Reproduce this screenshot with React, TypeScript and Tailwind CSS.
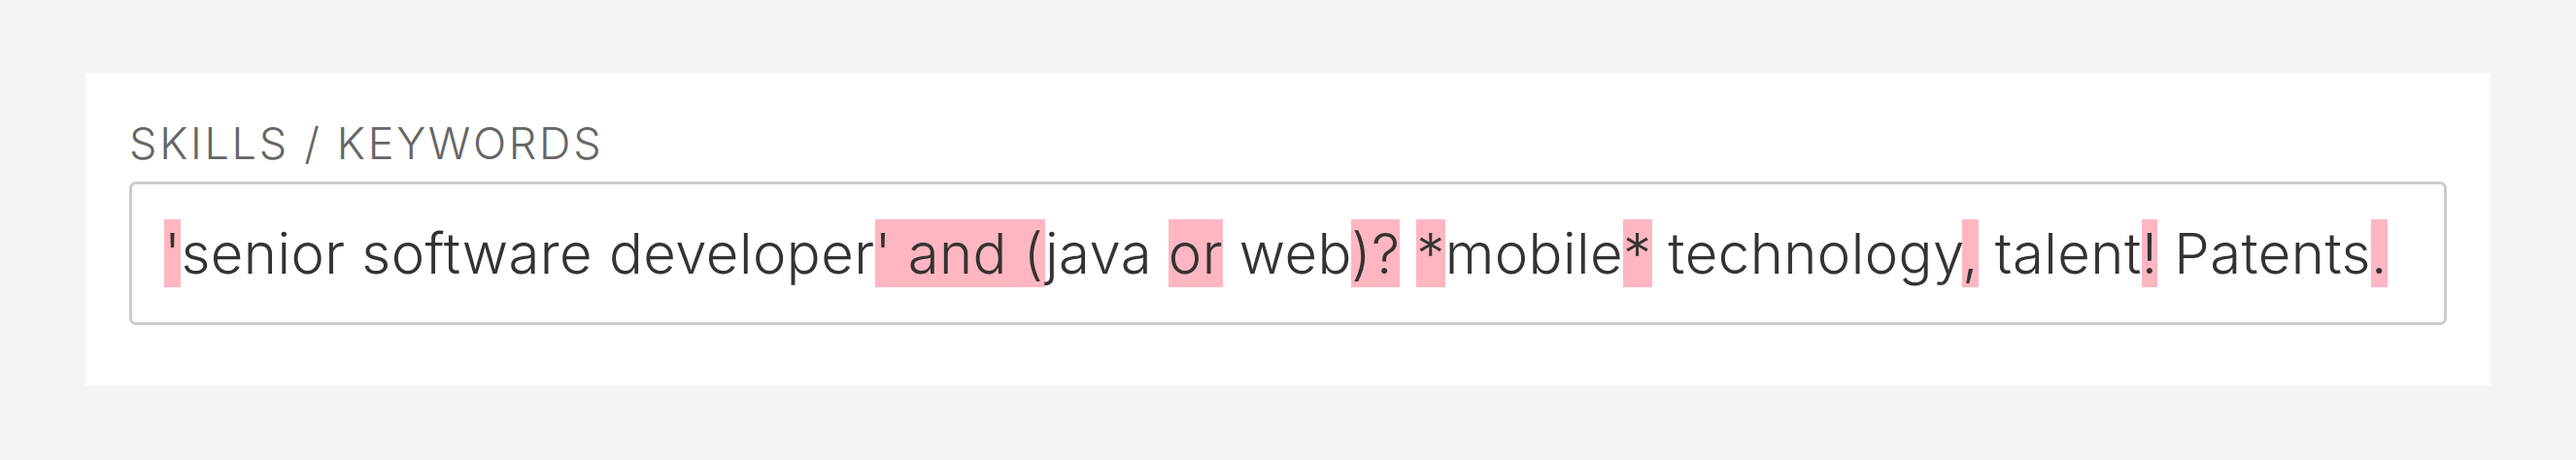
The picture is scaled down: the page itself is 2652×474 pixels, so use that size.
const hl = 'bg-[#ffb6c1]';

export default function App() {
  return (
    <div className="min-h-screen bg-[#f4f4f4] pt-[75px] px-[88px]">
      <div className="bg-white pt-[47px] pb-[62px] px-[45px]">
        <label className="block text-[45px] leading-[52px] tracking-[0.06em] text-[#666] font-['Inter',sans-serif] font-light mb-[13px]">
          SKILLS / KEYWORDS
        </label>
        <div className="h-[148px] border-[3px] border-[#ccc] rounded-[7px] flex items-center pl-[33px] bg-white">
          <p className="whitespace-nowrap text-[58px] tracking-[0.008em] text-[#333] font-['Inter',sans-serif] font-light leading-none">
            <span className={hl}>'</span>senior software developer
            <span className={hl}>' and (</span>java <span className={hl}>or</span> web
            <span className={hl}>)?</span> <span className={hl}>*</span>mobile
            <span className={hl}>*</span> technology<span className={hl}>,</span> talent
            <span className={hl}>!</span> Patents<span className={hl}>.</span>
          </p>
        </div>
      </div>
    </div>
  );
}
